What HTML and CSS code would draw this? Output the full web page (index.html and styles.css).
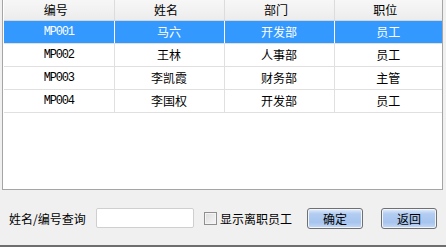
FILE: index.html
```html
<!DOCTYPE html>
<html lang="zh-CN">
<head>
    <meta charset="UTF-8">
    <title>员工查询</title>
    <link rel="stylesheet" href="styles.css">
</head>
<body>
    <div class="window">
        <div class="panel">
            <table class="grid">
                <colgroup>
                    <col class="c1"><col class="c2"><col class="c3"><col class="c4">
                </colgroup>
                <tr class="head">
                    <th>编号</th>
                    <th>姓名</th>
                    <th>部门</th>
                    <th>职位</th>
                </tr>
                <tr class="selected">
                    <td class="code">MP001</td>
                    <td>马六</td>
                    <td>开发部</td>
                    <td>员工</td>
                </tr>
                <tr>
                    <td class="code">MP002</td>
                    <td>王林</td>
                    <td>人事部</td>
                    <td>员工</td>
                </tr>
                <tr>
                    <td class="code">MP003</td>
                    <td>李凯霞</td>
                    <td>财务部</td>
                    <td>主管</td>
                </tr>
                <tr>
                    <td class="code">MP004</td>
                    <td>李国权</td>
                    <td>开发部</td>
                    <td>员工</td>
                </tr>
            </table>
        </div>

        <div class="toolbar">
            <label class="search-label" for="query">姓名/编号查询</label>
            <input type="text" id="query" class="search-input">
            <span class="check"></span>
            <span class="check-label">显示离职员工</span>
            <button class="btn ok">确定</button>
            <button class="btn back">返回</button>
        </div>
    </div>
</body>
</html>
```

FILE: styles.css
```css
body {
    margin: 0;
    background: #f0f0f0;
    font-family: "Noto Sans CJK SC", "Liberation Sans", sans-serif;
    font-size: 12px;
    color: #000000;
}
.window {
    width: 446px;
    height: 247px;
    box-sizing: border-box;
    border-bottom: 2px solid #6e6e6e;
    display: flex;
    flex-direction: column;
}
.panel {
    height: 190px;
    box-sizing: border-box;
    margin: 0 3px 0 2px;
    padding-left: 1px;
    background: #ffffff;
    border: 1px solid #a5a5a5;
    border-top: none;
}
.grid {
    width: 438px;
    table-layout: fixed;
    border-collapse: collapse;
}
.c1, .c2, .c3 {
    width: 110px;
}
.c4 {
    width: 108px;
}
.head th {
    height: 15px;
    padding: 0 6px 0 0;
    font-weight: normal;
    line-height: 20px;
    vertical-align: bottom;
    overflow: hidden;
    background: linear-gradient(#f7f7f7, #ececec);
    border-right: 1px solid #dcdcdc;
    border-bottom: 1px solid #d5d5d5;
}
.grid td {
    height: 22px;
    padding: 0;
    text-align: center;
    line-height: 22px;
    border: 1px solid #e0e0e0;
    border-left: none;
}
.grid tr td:last-child,
.head th:last-child {
    border-right: none;
}
.grid .selected td {
    background: #3399ff;
    color: #ffffff;
    border-top: 1px solid #ffffff;
    border-right-color: #ffffff;
}
.grid .selected td:last-child {
    border-right: none;
}
.code {
    font-family: "Liberation Mono", monospace;
    letter-spacing: -1.2px;
}
.toolbar {
    flex: 1;
    display: flex;
    align-items: center;
    padding: 1px 0 0 9px;
}
.search-label {
    width: 78px;
    margin-right: 9px;
}
.search-input {
    width: 98px;
    height: 20px;
    box-sizing: border-box;
    margin: 0 10px 0 0;
    border: 1px solid #cfcfcf;
    border-radius: 2px;
    background: #ffffff;
}
.check {
    width: 13px;
    height: 13px;
    box-sizing: border-box;
    margin-right: 3px;
    border: 1px solid #8f8f8f;
    background: linear-gradient(135deg, #dcdcdc, #f6f6f6);
    box-shadow: inset 0 0 0 1px #f4f4f4;
}
.check-label {
    margin-right: 15px;
}
.btn {
    width: 56px;
    height: 21px;
    padding: 0;
    font-family: inherit;
    font-size: 12px;
    line-height: 17px;
    color: #000000;
    border: 1px solid #707070;
    border-radius: 3px;
    background: linear-gradient(#e4eefb 0%, #b3cdf1 25%, #a6c4ee 70%, #c6dbf6 100%);
    box-shadow: inset 0 0 0 1px #f2f6fc;
}
.ok {
    margin-right: 18px;
}
```
